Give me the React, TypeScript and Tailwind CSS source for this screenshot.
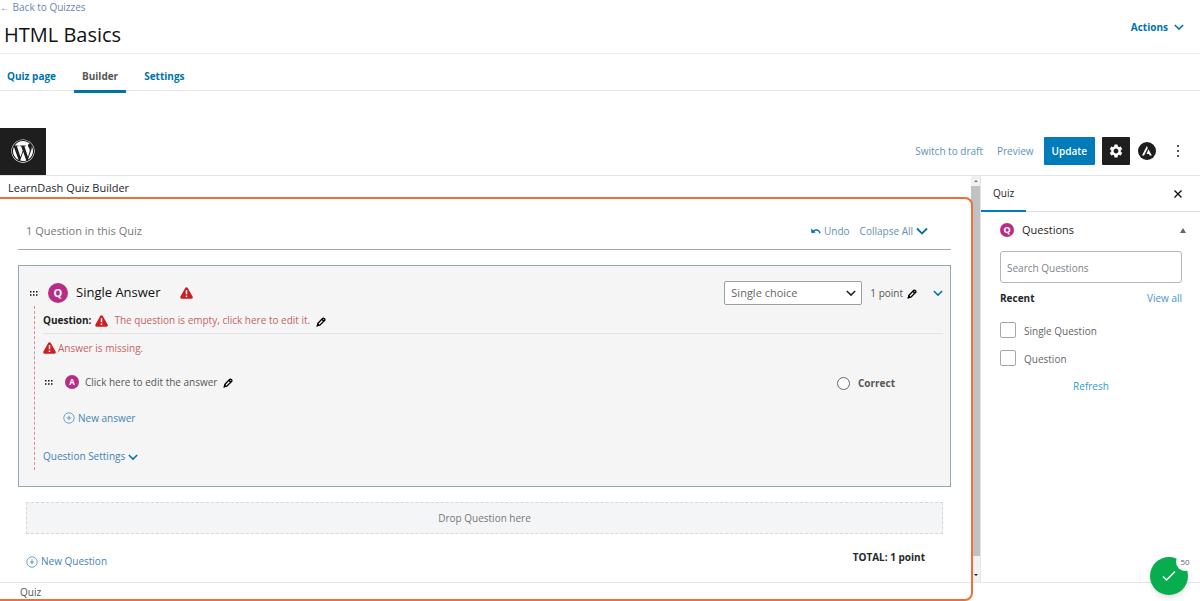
import { useState } from "react";
import type { ReactNode } from "react";
import { FaWordpress } from "react-icons/fa";
import { MdSettings } from "react-icons/md";
import clsx from "clsx";

// ── Icons ──────────────────────────────────────────────────────────

interface IconProps {
  className?: string;
}

function ChevronDown({ className }: IconProps) {
  return (
    <svg viewBox="0 0 12 8" fill="none" stroke="currentColor" strokeWidth="1.8" className={className} aria-hidden="true">
      <path d="M1 1.5 6 6.5 11 1.5" />
    </svg>
  );
}

function WarningIcon() {
  return (
    <svg viewBox="0 0 26 24" className="w-[13px] h-3 shrink-0" aria-hidden="true">
      <path d="M13 3.500 22.500 20.500H3.500Z" fill="#cb1f23" stroke="#cb1f23" strokeWidth="6" strokeLinejoin="round" />
      <path d="M13 6.500v8M13 17v3.200" stroke="#fff" strokeWidth="3" />
    </svg>
  );
}

function PencilIcon() {
  return (
    <svg viewBox="0 0 20 20" className="w-2.5 h-2.5 mt-0.5 shrink-0 text-black" fill="none" stroke="currentColor" aria-hidden="true">
      <path d="M4 12.500 13.500 2.500Q15 1.500 16.500 3L17.500 4Q18.500 5.500 17.500 6.500L8 16 3 17.500Z" strokeWidth="2.500" strokeLinejoin="round" />
      <path d="M11.500 4 16 8.500" strokeWidth="3.500" />
      <path d="M0.500 19.500 3 11.500 8.500 17Z" fill="currentColor" stroke="none" />
    </svg>
  );
}

function DragHandle() {
  return (
    <svg viewBox="0 0 8 5" className="w-2 h-[5px] shrink-0" fill="#111" aria-hidden="true">
      <path d="M0 0h1.500v1.500H0zM3 0h1.500v1.500H3zM6 0h1.500v1.500H6zM0 3.300h1.500v1.500H0zM3 3.300h1.500v1.500H3zM6 3.300h1.500v1.500H6z" />
    </svg>
  );
}

function PlusCircle() {
  return (
    <svg viewBox="0 0 12 12" className="w-3 h-3 shrink-0" fill="none" stroke="#5b9bc4" aria-hidden="true">
      <circle cx="6" cy="6" r="5.200" strokeWidth="0.900" />
      <path d="M6 3.800v4.400M3.800 6h4.400" strokeWidth="1" />
    </svg>
  );
}

function UndoIcon() {
  return (
    <svg viewBox="0 0 20 12" className="w-2.5 h-1.5 shrink-0" aria-hidden="true">
      <path d="M4 7C9 2 16 3 18 10.500" fill="none" stroke="#0073aa" strokeWidth="2.800" />
      <path d="M0 1 1 10.500 9.500 9Z" fill="#0073aa" />
    </svg>
  );
}

function AstraLogo() {
  return (
    <svg viewBox="0 0 18 18" className="w-[18px] h-[18px]" aria-hidden="true">
      <circle cx="9" cy="9" r="9" fill="#1e1e1e" />
      <path d="M8.800 4 9.800 6 6.100 13.500H4Z" fill="#fff" />
      <path d="M10.400 7.300 13.900 13.500H11.600L10.900 12H8.600Z" fill="#fff" />
    </svg>
  );
}

// ── Pieces ─────────────────────────────────────────────────────────

function LetterBadge({ letter, className }: { letter: string; className: string }) {
  return (
    <span
      className={clsx(
        "flex items-center justify-center shrink-0 rounded-full bg-[#b92c86] font-bold text-white",
        className,
      )}
    >
      {letter}
    </span>
  );
}

function TextButton({ children, className }: { children: ReactNode; className?: string }) {
  return (
    <button type="button" className={clsx("flex items-center gap-[3px]", className)}>
      {children}
    </button>
  );
}

const tabs = ["Quiz page", "Builder", "Settings"];
const recentQuestions = ["Single Question", "Question"];

function PageHeader() {
  const [activeTab, setActiveTab] = useState("Builder");

  return (
    <>
      <header className="flex items-center justify-between h-[54px] pr-4 border-b border-[#ececec]">
        <div className="pb-[3px]">
          <a href="#quizzes" className="block leading-4 text-[#6b87ad]">
            ← Back to Quizzes
          </a>
          <h1 className="pl-1 pt-1 text-xl leading-8 text-[#111]">HTML Basics</h1>
        </div>
        <button type="button" className="flex items-center gap-1.5 pt-px font-bold text-[#0073aa]">
          Actions
          <ChevronDown className="w-2.5 h-2" />
        </button>
      </header>
      <nav className="flex gap-2.5 h-[37px] border-b border-[#e4e6e8]">
        {tabs.map((tab) => (
          <button
            key={tab}
            type="button"
            onClick={() => setActiveTab(tab)}
            className={clsx(
              "h-[39px] px-2 pt-2 border-b-3 font-bold first:pl-[7px]",
              tab === activeTab ? "border-[#0073aa] text-[#555]" : "border-transparent text-[#0073aa]",
            )}
          >
            {tab}
          </button>
        ))}
      </nav>
    </>
  );
}

function EditorBar() {
  return (
    <div className="flex items-center justify-between h-12 mt-[37px] border-b border-[#e2e4e7]">
      <a href="#dashboard" aria-label="View posts" className="flex items-center justify-center w-[46px] h-full pb-px pr-px bg-[#1e1e1e]">
        <FaWordpress className="w-6 h-6 text-white" />
      </a>
      <div className="flex items-center pr-3 pb-px">
        <button type="button" className="mr-3.5 text-[#6091ba]">Switch to draft</button>
        <button type="button" className="mr-2.5 text-[#6091ba]">Preview</button>
        <button type="button" className="h-7 px-2 mr-[7px] rounded-[1px] bg-[#007cba] text-white font-semibold">
          Update
        </button>
        <button
          type="button"
          aria-label="Settings"
          className="flex items-center justify-center w-7 h-7 mr-2 rounded-[1px] bg-[#1e1e1e] text-white"
        >
          <MdSettings className="w-4 h-4" />
        </button>
        <button type="button" aria-label="Astra settings" className="mr-3">
          <AstraLogo />
        </button>
        <button type="button" aria-label="Options" className="flex flex-col items-center gap-[3px] w-5">
          <span className="size-0.5 rounded-full bg-[#1e1e1e]" />
          <span className="size-0.5 rounded-full bg-[#1e1e1e]" />
          <span className="size-0.5 rounded-full bg-[#1e1e1e]" />
        </button>
      </div>
    </div>
  );
}

function QuestionCard() {
  return (
    <section className="h-[222px] px-[7px] pt-3.5 border border-[#94a9b4] bg-[#f5f5f5]">
      <div className="flex items-center h-[26px] pl-1">
        <DragHandle />
        <LetterBadge letter="Q" className="w-5 h-5 ml-2.5 text-[11px]" />
        <h2 className="ml-2 mr-5 text-[13px] text-[#111]">Single Answer</h2>
        <WarningIcon />
        <div className="flex items-center ml-auto">
          <div className="relative">
            <select
              aria-label="Question type"
              className="block appearance-none w-[138px] h-6 pl-1.5 rounded-[2px] border border-[#9a9fa3] bg-white text-[11px] text-[#666]"
            >
              <option>Single choice</option>
            </select>
            <ChevronDown className="absolute right-1.5 top-2 w-2.5 h-2 text-[#222] pointer-events-none" />
          </div>
          <span className="ml-2 mr-1 text-[#555]">1 point</span>
          <PencilIcon />
          <button type="button" aria-label="Toggle question" className="ml-4 text-[#0073aa]">
            <ChevronDown className="w-2.5 h-2" />
          </button>
        </div>
      </div>
      <div className="h-[164px] ml-2 pl-2 border-l border-dashed border-[#d98a95]">
        <div className="flex items-center h-7 pt-0.5 border-b border-[#e3e3e3]">
          <span className="mr-1 font-bold text-[#222]">Question:</span>
          <WarningIcon />
          <button type="button" className="mx-1.5 text-[#c56363]">
            The question is empty, click here to edit it.
          </button>
          <PencilIcon />
        </div>
        <p className="flex items-center gap-0.5 h-7 text-[#c56363]">
          <WarningIcon />
          Answer is missing.
        </p>
        <div className="flex items-center h-10 pl-0.5 pr-12">
          <DragHandle />
          <LetterBadge letter="A" className="w-3.5 h-3.5 ml-3 text-[8px]" />
          <span className="mx-1.5 text-[#555]">Click here to edit the answer</span>
          <PencilIcon />
          <label className="flex items-center gap-2 ml-auto pt-0.5 font-bold text-[#555]">
            <input type="radio" name="correct" className="appearance-none w-[13px] h-[13px] rounded-full border border-[#666] bg-white" />
            Correct
          </label>
        </div>
        <TextButton className="h-8 ml-5 text-[#4484b2]">
          <PlusCircle />
          New answer
        </TextButton>
        <TextButton className="pt-[15px] text-[#4484b2]">
          Question Settings
          <ChevronDown className="w-2.5 h-2 text-[#0073aa]" />
        </TextButton>
      </div>
    </section>
  );
}

function QuizBuilder() {
  return (
    <main className="flex-1 min-w-0">
      <h2 className="h-6 pl-2 text-[11px] leading-6 text-[#23282d]">LearnDash Quiz Builder</h2>
      <div className="pl-[18px] pr-5">
        <div className="flex items-center justify-between h-[50px] mb-[15px] pl-2 pr-[23px] pt-4 border-b border-[#9fabb1]">
          <p className="pb-[3px] text-[11px] text-[#777]">1 Question in this Quiz</p>
          <div className="flex gap-2.5 pb-[3px]">
            <TextButton className="text-[#6391b5]">
              <UndoIcon />
              Undo
            </TextButton>
            <TextButton className="text-[#6391b5]">
              Collapse All
              <ChevronDown className="w-3 h-2 text-[#0073aa]" />
            </TextButton>
          </div>
        </div>
        <QuestionCard />
        <div className="flex items-center justify-center h-8 mt-[15px] mx-2 border border-dashed border-[#d5d8da] bg-[#f3f5f6] text-[#777]">
          Drop Question here
        </div>
        <div className="flex items-start justify-between h-12 pl-2 pr-[26px] pt-4">
          <TextButton className="pt-1 text-[#4484b2]">
            <PlusCircle />
            New Question
          </TextButton>
          <p className="font-bold text-[#23282d]">TOTAL: 1 point</p>
        </div>
      </div>
    </main>
  );
}

function ScrollRail() {
  return (
    <div className="flex flex-col items-center w-[9px] bg-[#f1f1f1]" aria-hidden="true">
      <span className="my-1 border-x-2 border-b-2 border-x-transparent border-b-[#777]" />
      <span className="flex-1 w-full bg-[#c1c1c1]" />
      <span className="mt-[18px] mb-1.5 border-x-2 border-t-2 border-x-transparent border-t-[#222]" />
    </div>
  );
}

function QuizSidebar() {
  return (
    <aside className="w-[220px] shrink-0 border-l border-[#e2e4e7]">
      <div className="flex items-center justify-between h-9 pr-4 border-b border-[#dcdcdc]">
        <button type="button" className="h-9 px-3 pt-0.5 border-b-2 border-[#007cba] text-[#1e1e1e]">
          Quiz
        </button>
        <button type="button" aria-label="Close settings">
          <svg viewBox="0 0 12 12" className="w-3 h-3" fill="none" stroke="#111" strokeWidth="1.400" aria-hidden="true">
            <path d="m2.500 2.500 7 7M9.500 2.500l-7 7" />
          </svg>
        </button>
      </div>
      <div className="pl-[19px] pr-[18px]">
        <button type="button" className="flex items-center w-full h-9 text-[11px] text-[#1e1e1e]">
          <LetterBadge letter="Q" className="w-3.5 h-3.5 mr-2 text-[9px]" />
          Questions
          <span className="ml-auto -mr-1 border-x-3 border-b-5 border-x-transparent border-b-[#666]" />
        </button>
        <input
          type="search"
          aria-label="Search Questions"
          placeholder="Search Questions"
          className="block w-full h-8 mt-[3px] px-1.5 pt-0.5 rounded-[3px] border border-[#b4b7ba] bg-white placeholder:text-[#7d8388]"
        />
        <div className="flex items-center justify-between h-[30px]">
          <h3 className="font-bold text-[#23282d]">Recent</h3>
          <a href="#all" className="text-[#4a94c8]">View all</a>
        </div>
        {recentQuestions.map((question) => (
          <label key={question} className="flex items-center gap-2 h-7 text-[#666] first-of-type:mt-[3px]">
            <input type="checkbox" className="appearance-none w-4 h-4 rounded-[2px] border border-[#a5a8ab] bg-white" />
            <span className="pt-0.5">{question}</span>
          </label>
        ))}
        <button type="button" className="block h-7 mx-auto text-[#2e9bcb]">Refresh</button>
      </div>
    </aside>
  );
}

export default function App() {
  return (
    <div className="relative min-h-screen overflow-hidden bg-white font-['Open_Sans','Noto_Sans',sans-serif] text-[10px]">
      <PageHeader />
      <EditorBar />
      <div className="relative">
        <div className="flex">
          <QuizBuilder />
          <ScrollRail />
          <QuizSidebar />
        </div>
        <footer className="h-[19px] pl-5 border-t border-[#e6e6e6] leading-[18px] text-[#555]">Quiz</footer>
        {/* Highlight around the builder area */}
        <div className="absolute top-[21px] bottom-0 -left-2 right-[227px] rounded-lg border-2 border-[#ee6f3c] pointer-events-none" />
      </div>
      {/* Performance score */}
      <button
        type="button"
        aria-label="Page score"
        className="fixed right-3 bottom-1.5 flex items-center justify-center w-[38px] h-[38px] rounded-full bg-[#08ad50] shadow-md"
      >
        <svg viewBox="0 0 14 12" className="w-3.5 h-3" fill="none" stroke="#fff" strokeWidth="1.500" aria-hidden="true">
          <path d="m1 6.500 3.500 3.500L13 1.500" />
        </svg>
        <span className="absolute -top-1 -right-1.5 flex items-center justify-center w-[18px] h-[18px] rounded-full bg-white text-[8px] text-[#666]">
          50
        </span>
      </button>
    </div>
  );
}
